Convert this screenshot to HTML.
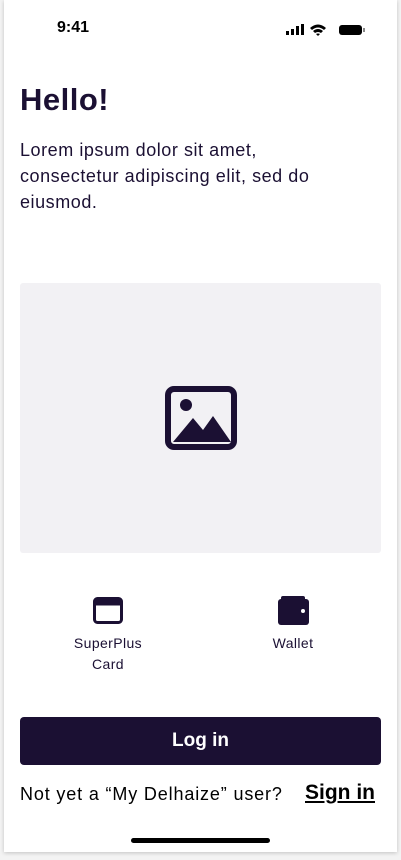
<!DOCTYPE html>
<html><head><style>
*{margin:0;padding:0;box-sizing:border-box}
html,body{width:401px;height:860px;background:#f3f3f3;overflow:hidden;font-family:"Liberation Sans",sans-serif;color:#1b1033}
.ph{position:absolute;left:4px;top:0;width:393px;height:852px;background:#fff;box-shadow:0 1px 4px rgba(0,0,0,.2)}
.abs{position:absolute}
</style></head><body>
<div class="ph"></div>
<div class="abs" style="left:57px;top:19px;font-size:16px;font-weight:bold;color:#000">9:41</div>
<svg class="abs" style="left:286px;top:23px" width="80" height="14" viewBox="0 0 80 14">
<rect x="0" y="8" width="3" height="4" fill="#000"/><rect x="5" y="6" width="3" height="6" fill="#000"/><rect x="10" y="3" width="3" height="9" fill="#000"/><rect x="15" y="1" width="3" height="11" fill="#000"/>
<path d="M24 5 Q32 -2 40 5 L38 7 Q32 2 26 7Z M27 8 Q32 4 37 8 L35 10 Q32 8 29 10Z M30 11 L32 13 L34 11 Q32 10 30 11Z" fill="#000"/>
<rect x="53" y="2" width="23" height="10" rx="3" fill="#000"/><rect x="77" y="5" width="2" height="4" fill="#888"/>
</svg>
<div class="abs" style="left:20px;top:82px;font-size:31px;font-weight:bold;letter-spacing:0.5px">Hello!</div>
<div class="abs" style="left:20px;top:137px;font-size:18px;line-height:26px;width:370px;letter-spacing:0.55px;white-space:nowrap">Lorem ipsum dolor sit amet,<br>consectetur adipiscing elit, sed do<br>eiusmod.</div>
<div class="abs" style="left:20px;top:283px;width:361px;height:270px;background:#f2f1f4;border-radius:3px"></div>
<svg class="abs" style="left:165px;top:386px" width="72" height="64" viewBox="0 0 72 64">
<rect x="3" y="3" width="66" height="58" rx="6" fill="none" stroke="#1b1033" stroke-width="6"/>
<circle cx="21" cy="19" r="6" fill="#1b1033"/>
<path d="M8 56 L28 32 L38 44 L48 30 L66 56Z" fill="#1b1033"/>
</svg>
<svg class="abs" style="left:93px;top:597px" width="30" height="27" viewBox="0 0 30 27">
<rect x="1.5" y="1.5" width="27" height="24" rx="3" fill="none" stroke="#1b1033" stroke-width="3"/>
<rect x="1.5" y="1.5" width="27" height="7" fill="#1b1033"/>
</svg>
<svg class="abs" style="left:278px;top:596px" width="31" height="29" viewBox="0 0 31 29">
<rect x="3" y="0" width="24" height="5" rx="2" fill="#1b1033"/>
<rect x="0" y="3" width="31" height="26" rx="3" fill="#1b1033"/>
<circle cx="25" cy="15" r="2" fill="#fff"/>
</svg>
<div class="abs" style="left:48px;top:633px;width:120px;text-align:center;font-size:14px;line-height:21px;letter-spacing:0.4px">SuperPlus<br>Card</div>
<div class="abs" style="left:233px;top:633px;width:120px;text-align:center;font-size:14px;line-height:21px;letter-spacing:0.4px">Wallet</div>
<div class="abs" style="left:20px;top:717px;width:361px;height:48px;background:#1b1033;border-radius:4px;color:#fff;font-size:19px;font-weight:bold;text-align:center;line-height:48px">Log in</div>
<div class="abs" style="left:20px;top:784px;font-size:18px;color:#000;letter-spacing:0.85px;white-space:nowrap">Not yet a “My Delhaize” user?</div>
<div class="abs" style="left:305px;top:781px;font-size:21px;font-weight:bold;color:#000;text-decoration:underline">Sign in</div>
<div class="abs" style="left:131px;top:838px;width:139px;height:5px;border-radius:3px;background:#000"></div>
</body></html>
